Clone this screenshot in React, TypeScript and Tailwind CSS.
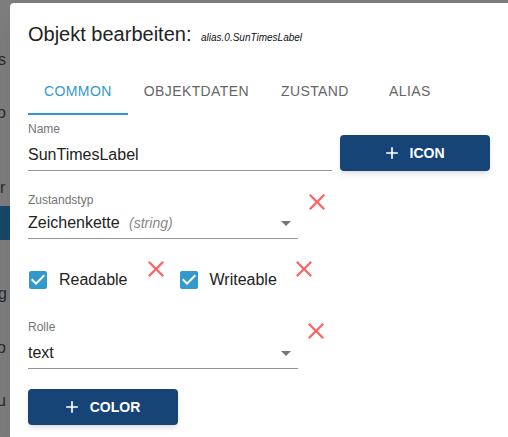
import { useState } from 'react';

const font = { fontFamily: '"Liberation Sans", Arial, sans-serif' };

function CloseX() {
  return (
    <svg viewBox="5 5 14 14" className="w-4 h-4 shrink-0 fill-[#ff6363]">
      <path d="M19 6.41 17.59 5 12 10.59 6.41 5 5 6.41 10.59 12 5 17.59 6.41 19 12 13.41 17.59 19 19 17.59 13.41 12z" />
    </svg>
  );
}

function ArrowDown() {
  return (
    <svg viewBox="0 0 24 24" className="w-6 h-6 shrink-0 fill-[#757575]">
      <path d="M7 10l5 5 5-5z" />
    </svg>
  );
}

function PlusIcon() {
  return (
    <svg viewBox="0 0 24 24" className="w-5 h-5 fill-white">
      <path d="M19 13h-6v6h-2v-6H5v-2h6V5h2v6h6v2z" />
    </svg>
  );
}

function Check({ label, checked }: { label: string; checked: boolean }) {
  return (
    <div className="flex items-center h-6 mt-[7px]">
      <svg viewBox="0 0 24 24" className="w-6 h-6 fill-[#3399cc] -ml-[2px]">
        {checked ? (
          <path d="M19 3H5c-1.11 0-2 .9-2 2v14c0 1.1.89 2 2 2h14c1.11 0 2-.9 2-2V5c0-1.1-.89-2-2-2zm-9 14l-5-5 1.41-1.41L10 14.17l7.59-7.59L19 8l-9 9z" />
        ) : (
          <path d="M19 5v14H5V5h14m0-2H5c-1.1 0-2 .9-2 2v14c0 1.1.9 2 2 2h14c1.1 0 2-.9 2-2V5c0-1.1-.9-2-2-2z" />
        )}
      </svg>
      <span className="ml-[9px] text-[16px] leading-6 text-[#222]">{label}</span>
    </div>
  );
}

export default function App() {
  const [tab, setTab] = useState(0);
  const tabs = ['Common', 'Objektdaten', 'Zustand', 'Alias'];

  return (
    <div className="w-[508px] h-[437px] overflow-hidden flex bg-[#7d7d7d]" style={font}>
      {/* dimmed page behind the dialog */}
      <div className="w-[10px] shrink-0 flex flex-col text-[16px] leading-5 text-[#2a2a2a] overflow-hidden">
        <span className="mt-[50px] -ml-[2px]">s</span>
        <span className="mt-[33px] -ml-[3px]">o</span>
        <span className="mt-[55px]">r</span>
        <div className="mt-[8px] h-[34px] bg-[#174a68]" />
        <span className="mt-[44px] -ml-[2px]">g</span>
        <span className="mt-[34px] -ml-[3px]">o</span>
        <span className="mt-[33px] -ml-[3px]">u</span>
      </div>

      <div className="flex-1 mt-[3px] bg-white rounded-tl-[4px] shadow-xl pl-[18px] flex flex-col">
        <h2 className="mt-[19px] h-6 text-[20px] leading-6 text-[#222] font-normal whitespace-nowrap">
          Objekt bearbeiten: <span className="text-[10px] leading-none italic text-[#111] ml-[4px]">alias.0.SunTimesLabel</span>
        </h2>

        <div className="mt-[21px] flex h-12">
          {tabs.map((t, i) => (
            <button
              key={t}
              onClick={() => setTab(i)}
              className={`relative h-12 min-w-[90px] px-4 text-[14px] uppercase tracking-[0.4px] ${
                tab === i ? 'text-[#3399cc]' : 'text-[#666]'
              }`}
            >
              {t}
              {tab === i && <span className="absolute left-0 right-0 bottom-0 h-[2px] bg-[#3399cc]" />}
            </button>
          ))}
        </div>

        {/* Name */}
        <div className="mt-[7px] flex items-start">
          <div className="w-[304px] flex flex-col">
            <span className="text-[12px] leading-[14px] text-[#757575]">Name</span>
            <div className="pt-[9px] pb-[6px] border-b border-[#949494] text-[16px] leading-[19px] text-[#222]">
              SunTimesLabel
            </div>
          </div>
          <button className="ml-2 mt-[13px] w-[150px] h-9 rounded bg-[#164477] shadow-md flex items-center justify-center gap-2 text-white text-[14px] font-semibold uppercase">
            <span className="-ml-1"><PlusIcon /></span>
            Icon
          </button>
        </div>

        {/* Zustandstyp */}
        <div className="mt-[22px] flex items-start">
          <div className="w-[270px] flex flex-col">
            <span className="text-[12px] leading-[14px] text-[#757575]">Zustandstyp</span>
            <div className="pt-[6px] pb-[6px] border-b border-[#949494] flex items-center justify-between h-[32px]">
              <span className="text-[16px] leading-[19px] text-[#222]">
                Zeichenkette <span className="ml-[5px] text-[14px] italic text-[#888]">(string)</span>
              </span>
              <ArrowDown />
            </div>
          </div>
          <div className="ml-[11px] mt-[1px]"><CloseX /></div>
        </div>

        {/* Checkboxes */}
        <div className="mt-[22px] flex items-start">
          <Check label="Readable" checked />
          <div className="ml-[20px]"><CloseX /></div>
          <div className="ml-[15px]"><Check label="Writeable" checked /></div>
          <div className="ml-[19px]"><CloseX /></div>
        </div>

        {/* Rolle */}
        <div className="mt-[28px] flex items-start">
          <div className="w-[270px] flex flex-col">
            <span className="text-[12px] leading-[14px] text-[#757575]">Rolle</span>
            <div className="pt-[9px] pb-[6px] border-b border-[#949494] flex items-center justify-between h-[35px]">
              <span className="text-[16px] leading-[19px] text-[#222]">text</span>
              <ArrowDown />
            </div>
          </div>
          <div className="ml-[10px] mt-[3px]"><CloseX /></div>
        </div>

        <button className="mt-[20px] w-[150px] h-9 rounded bg-[#164477] shadow-md flex items-center justify-center gap-2 text-white text-[14px] font-semibold uppercase">
          <span className="-ml-1"><PlusIcon /></span>
          Color
        </button>
      </div>
    </div>
  );
}
